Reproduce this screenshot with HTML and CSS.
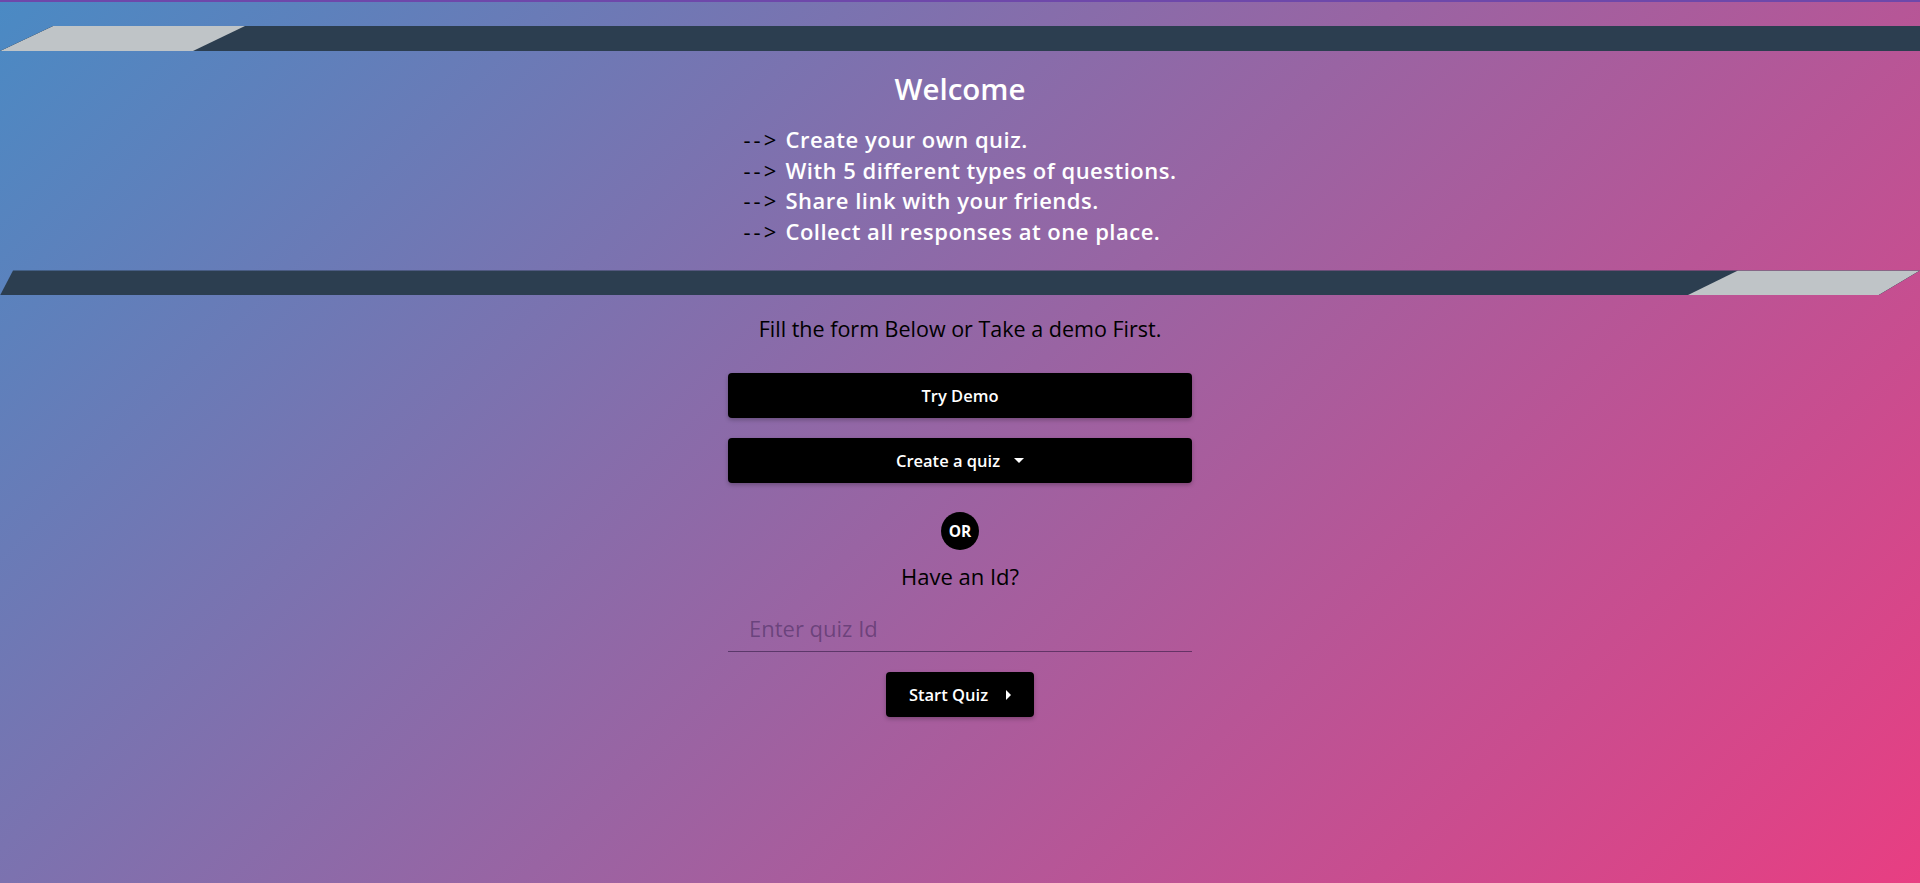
FILE: index.html
```html
<!DOCTYPE html>
<html lang="en">
<head>
<meta charset="utf-8">
<title>Quiz</title>
<link rel="stylesheet" href="styles.css">
</head>
<body>
<div class="page">
  <div class="band band-top">
    <div class="band-light band-light-left"></div>
  </div>

  <section class="welcome">
    <h1 class="welcome-title">Welcome</h1>
    <ul class="features">
      <li><span class="arrow">--&gt;</span> Create your own quiz.</li>
      <li><span class="arrow">--&gt;</span> With 5 different types of questions.</li>
      <li><span class="arrow">--&gt;</span> Share link with your friends.</li>
      <li><span class="arrow">--&gt;</span> Collect all responses at one place.</li>
    </ul>
  </section>

  <div class="band band-bottom">
    <div class="band-light band-light-right"></div>
  </div>

  <main class="form">
    <p class="lead">Fill the form Below or Take a demo First.</p>
    <button class="btn btn-block">Try Demo</button>
    <button class="btn btn-block">Create a quiz <span class="caret-down"></span></button>
    <div class="or">OR</div>
    <p class="have-id">Have an Id?</p>
    <div class="field">
      <input class="id-input" type="text" placeholder="Enter quiz Id">
    </div>
    <button class="btn btn-start">Start Quiz <span class="caret-right"></span></button>
  </main>
</div>
</body>
</html>
```

FILE: styles.css
```css
html, body {
  margin: 0;
  padding: 0;
}

body {
  min-height: 100vh;
  background: linear-gradient(135deg, #4a8ac4 0%, #e83e82 100%);
  font-family: "Open Sans", "Noto Sans", sans-serif;
  color: #000;
}

.page {
  border-top: 2px solid #6e48aa;
  min-height: calc(100vh - 2px);
  display: flex;
  flex-direction: column;
}

.band {
  height: 25px;
  background: #2c3e50;
  display: flex;
}

.band-top {
  margin-top: 24px;
  clip-path: polygon(53px 0, 100% 0, 100% 100%, 0 100%);
}

.band-bottom {
  margin-top: 24px;
  clip-path: polygon(13px 0, 100% 0, calc(100% - 42px) 100%, 0 100%);
  justify-content: flex-end;
}

.band-light {
  background: #bfc4c7;
  height: 100%;
}

.band-light-left {
  width: 245px;
  clip-path: polygon(53px 0, 100% 0, 193px 100%, 0 100%);
}

.band-light-right {
  width: 233px;
  clip-path: polygon(51px 0, 100% 0, 191px 100%, 0 100%);
}

.welcome {
  display: flex;
  flex-direction: column;
  align-items: center;
}

.welcome-title {
  margin: 18px 0 0;
  font-size: 29.5px;
  line-height: 40px;
  font-weight: 600;
  color: #fff;
}

.features {
  list-style: none;
  margin: 15px 0 0;
  padding: 0;
  font-size: 22px;
  line-height: 30.6px;
  font-weight: 600;
  color: #fff;
  letter-spacing: 0.5px;
}

.arrow {
  color: #000;
  font-weight: 400;
  letter-spacing: 3px;
}

.form {
  width: 464px;
  margin: 0 auto;
  display: flex;
  flex-direction: column;
  align-items: center;
}

.lead {
  margin: 20px 0 0;
  font-size: 21.5px;
  line-height: 28px;
}

.btn {
  background: #000;
  color: #fff;
  border: none;
  border-radius: 4px;
  font-family: inherit;
  font-weight: 600;
  font-size: 16.5px;
  height: 45px;
  box-shadow: 0 2px 4px rgba(0, 0, 0, 0.25);
  display: flex;
  align-items: center;
  justify-content: center;
  gap: 12px;
  cursor: pointer;
  padding: 0;
}

.btn-block {
  width: 100%;
}

.btn-block:first-of-type {
  margin-top: 30px;
}

.btn-block + .btn-block {
  margin-top: 20px;
}

.caret-down {
  width: 0;
  height: 0;
  border-left: 5px solid transparent;
  border-right: 5px solid transparent;
  border-top: 5px solid #fff;
  margin-left: 2px;
}

.caret-right {
  width: 0;
  height: 0;
  border-top: 5px solid transparent;
  border-bottom: 5px solid transparent;
  border-left: 5px solid #fff;
  margin-left: 6px;
}

.or {
  margin-top: 29px;
  width: 38px;
  height: 38px;
  border-radius: 50%;
  background: #000;
  color: #fff;
  font-weight: 700;
  font-size: 15.5px;
  display: flex;
  align-items: center;
  justify-content: center;
}

.have-id {
  margin: 12px 0 0;
  font-size: 22px;
  line-height: 28px;
}

.field {
  width: 100%;
  margin-top: 16px;
  border-bottom: 1px solid rgba(40, 20, 60, 0.55);
}

.id-input {
  width: 100%;
  box-sizing: border-box;
  background: transparent;
  border: none;
  outline: none;
  font-family: inherit;
  font-size: 22px;
  height: 45px;
  padding: 0 21px 2px;
  color: #000;
}

.id-input::placeholder {
  color: rgba(40, 20, 70, 0.42);
}

.btn-start {
  margin-top: 20px;
  width: 148px;
}
```
